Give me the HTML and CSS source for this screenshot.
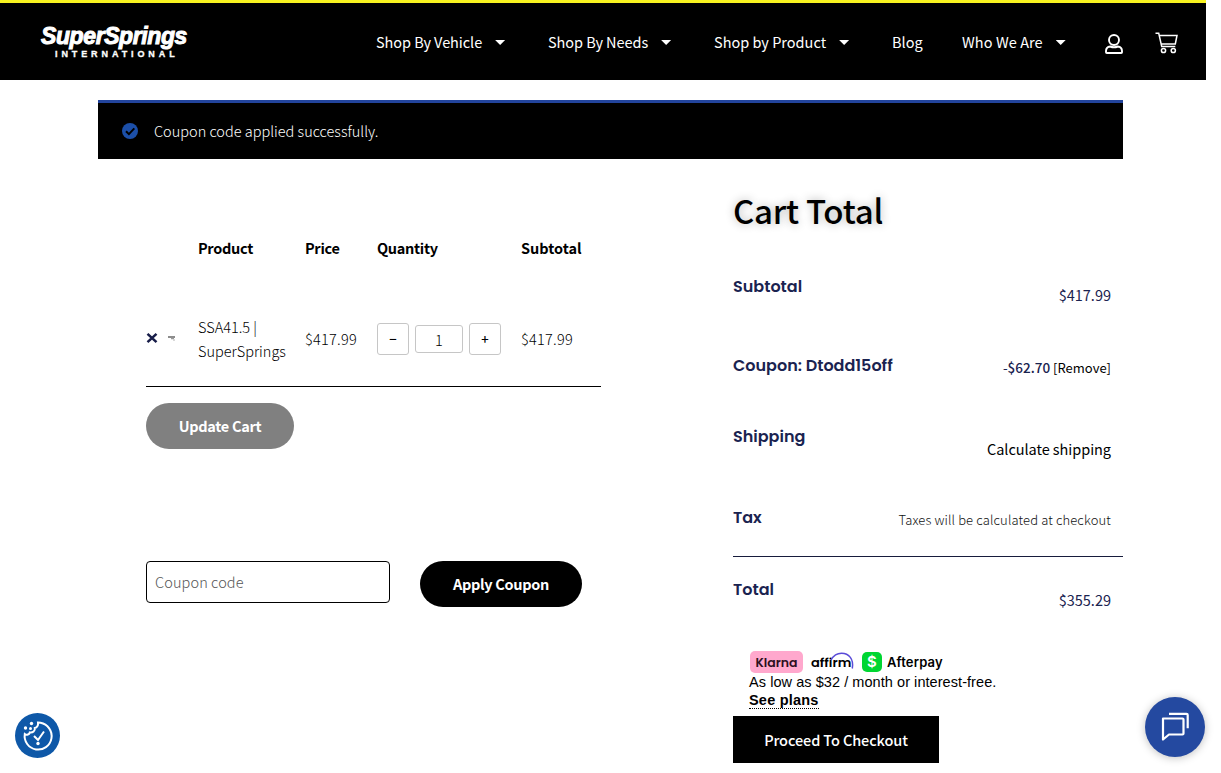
FILE: index.html
```html
<!DOCTYPE html>
<html lang="en">
<head>
<meta charset="utf-8">
<title>Cart - SuperSprings International</title>
<link rel="stylesheet" href="styles.css">
</head>
<body>
<header class="site-header">
  <a class="logo"><span class="logo-name">SuperSprings</span><span class="logo-sub">INTERNATIONAL</span></a>
  <nav class="nav">
    <a class="w1"><span>Shop By Vehicle</span><i class="caret"></i></a>
    <a class="w2"><span>Shop By Needs</span><i class="caret"></i></a>
    <a class="w3"><span>Shop by Product</span><i class="caret"></i></a>
    <a class="w4"><span>Blog</span></a>
    <a class="w5"><span>Who We Are</span><i class="caret"></i></a>
  </nav>
  <svg class="icon-user" viewBox="0 0 18 20"><circle cx="9" cy="6" r="5"/><path d="M5.300 12.500C2.500 12.800 1 14.500 1 17v1.200q0 .8.800.8h14.400q.8 0 .8-.8V17c0-2.500-1.500-4.200-4.300-4.500-2.400 1-5 1-7.400 0z"/></svg>
  <svg class="icon-cart" viewBox="0 0 23 22"><path d="M.5 1.200h3.200l3 13.300h13.600M4.200 3.500h17.800l-1.700 8.500H6.200"/><circle cx="8.500" cy="18.500" r="2.100"/><circle cx="18.300" cy="18.500" r="2.100"/></svg>
</header>
<main class="page">
  <div class="notice">
    <svg class="notice-icon" viewBox="0 0 16 16"><circle cx="8" cy="8" r="8"/><path d="M4 8.200l2.900 2.900L12.300 5.400"/></svg>
    <span>Coupon code applied successfully.</span>
  </div>
  <div class="columns">
    <section class="cart">
      <div class="row head"><span></span><span></span><span class="tight">Product</span><span class="tight">Price</span><span class="tight">Quantity</span><span>Subtotal</span></div>
      <div class="row item">
        <svg class="remove" viewBox="0 0 12 12"><path d="M1.500 1.800l9 8.400M10.500 1.800l-9 8.400"/></svg>
        <svg class="thumb" viewBox="0 0 9 7"><path class="t1" d="M1 2h7"/><path class="t2" d="M4 3.500h3"/><path class="t3" d="M6 5h2"/></svg>
        <span class="name">SSA41.5 |<br>SuperSprings</span>
        <span class="price">$417.99</span>
        <div class="qty"><button>−</button><span class="qty-value">1</span><button>+</button></div>
        <span class="price">$417.99</span>
      </div>
      <button class="pill update">Update Cart</button>
      <div class="coupon"><input class="coupon-input" placeholder="Coupon code"><button class="pill apply">Apply Coupon</button></div>
    </section>
    <section class="totals">
      <h2>Cart Total</h2>
      <div class="line l-sub"><span class="label">Subtotal</span><span class="value v-sub">$417.99</span></div>
      <div class="line l-coupon"><span class="label">Coupon: Dtodd15off</span><span class="value v-coupon">-<b>$62.70</b> <a>[Remove]</a></span></div>
      <div class="line l-ship"><span class="label">Shipping</span><span class="value v-ship">Calculate shipping</span></div>
      <div class="line l-tax"><span class="label">Tax</span><span class="value v-tax">Taxes will be calculated at checkout</span></div>
      <div class="line l-total"><span class="label">Total</span><span class="value v-total">$355.29</span></div>
      <div class="plans">
        <div class="brands">
          <span class="klarna">Klarna</span>
          <span class="affirm">affirm<svg class="arc" viewBox="0 0 26 18"><path d="M2 8C4.500 3.500 8 1.200 12.500 1.200c7.500 0 12.500 6 10.800 15.300"/></svg></span>
          <span class="cash">$</span>
          <span class="afterpay">Afterpay</span>
        </div>
        <div class="plans-text">As low as $32 / month or interest-free.</div>
        <a class="plans-link">See plans</a>
      </div>
      <button class="checkout">Proceed To Checkout</button>
    </section>
  </div>
</main>
<div class="float cookie"><svg viewBox="0 0 45 45"><path d="M23 9.500c1 0 1.500.1 2.500.3A13.500 13.500 0 1 1 9.800 21c2 1.500 4.700.5 5-1.500 3 .5 5.500-1.500 5-4.500 2.500-.3 3.500-3 3.200-5.500z"/><path d="M19 23l4 4 6-8.500"/><g class="dots"><circle cx="16.500" cy="10.500" r="1.700"/><circle cx="10.500" cy="15" r="1.700"/><circle cx="15.500" cy="15.500" r="1.500"/><circle cx="23" cy="30.500" r="1.700"/></g></svg></div>
<div class="float chat"><svg viewBox="0 0 60 60"><path d="M18 21.500h19.500q1 0 1 1v14q0 1-1 1H24l-6 5z"/><path d="M24 16.800h17.500q1.200 0 1.200 1.200v13.200"/></svg></div>
</body>
</html>
```
FILE: styles.css
```css
* { box-sizing: border-box; }
body { margin: 0; width: 1221px; height: 773px; overflow: hidden; background: #fff; color: #000; font-family: "Noto Sans CJK SC", "Noto Sans", sans-serif; font-size: 14.5px; line-height: 24px; }
button, input { font: inherit; margin: 0; }
.site-header { width: 1206px; height: 80px; background: #000; border-top: 3px solid #f8f320; color: #fff; display: flex; padding-left: 41px; }
.logo { width: 335px; padding-top: 20px; display: flex; flex-direction: column; font-family: "Liberation Sans", Arial, sans-serif; font-weight: bold; }
.logo-name { font-size: 23px; line-height: 26px; font-style: italic; letter-spacing: -.4px; -webkit-text-stroke: 1px #fff; }
.logo-sub { font-size: 9px; line-height: 10px; letter-spacing: 3.900px; padding-left: 14px; -webkit-text-stroke: .3px #fff; }
.nav { display: flex; padding-top: 27px; }
.nav a { display: flex; gap: 13px; white-space: nowrap; }
.w1 { width: 172px; letter-spacing: -.060px; }
.w2 { width: 166px; letter-spacing: -.060px; }
.w3 { width: 178px; }
.w4 { width: 70px; }
.w5 { width: 143px; letter-spacing: .080px; }
.caret { width: 10px; height: 5px; margin-top: 10px; background: #fff; clip-path: polygon(0 0, 100% 0, 50% 100%); }
.icon-user { width: 18px; height: 20px; margin-top: 31px; fill: none; stroke: #fff; stroke-width: 1.900; }
.icon-cart { width: 23px; height: 22px; margin: 29px 0 0 32px; fill: none; stroke: #fff; stroke-width: 1.500; }
.page { width: 1025px; margin: 20px 0 0 98px; }
.notice { height: 59px; background: #000; border-top: 3px solid #22449c; color: #fff; display: flex; align-items: center; padding: 0 0 0 24px; gap: 16px; font-weight: 300; }
.notice-icon { width: 16px; height: 16px; fill: #1c4fa8; margin-top: -1px; }
.notice-icon path { fill: none; stroke: #000; stroke-width: 2; }
.columns { display: flex; }
.cart { width: 635px; padding: 77px 0 0 48px; }
.row { display: grid; grid-template-columns: 20px 32px 107px 72px 144px 80px; width: 455px; align-items: center; }
.head { font-weight: 700; height: 24px; }
.tight { letter-spacing: -.3px; }
.item { height: 127px; border-bottom: 1px solid #000; padding-top: 31px; font-weight: 300; }
.price { letter-spacing: .25px; }
.remove { width: 12px; height: 12px; margin-top: -1px; stroke: #171c48; stroke-width: 2.500; }
.thumb { width: 9px; height: 7px; margin: 0 0 0 1px; fill: none; stroke-width: 1.500; }
.t1 { stroke: #666; }
.t2 { stroke: #999; }
.t3 { stroke: #ccc; }
.qty { display: flex; align-items: center; gap: 6px; }
.qty button { width: 32px; height: 32px; border: 1px solid #c6c6c6; border-radius: 3px; background: #fff; color: #000; padding: 0; font-size: 13px; font-weight: 500; }
.qty-value { width: 48px; height: 28px; border: 1px solid #c6c6c6; border-radius: 3px; text-align: center; line-height: 28px; }
.pill { border: 0; border-radius: 23px; height: 46px; color: #fff; font-weight: 600; padding: 0; display: block; letter-spacing: -.3px; }
.update { width: 148px; background: #808080; margin-top: 16px; }
.coupon { display: flex; gap: 30px; margin-top: 112px; }
.coupon-input { width: 244px; height: 42px; border: 1px solid #000; border-radius: 4px; padding: 0 8px 2px; font-weight: 300; letter-spacing: .100px; }
.coupon-input::placeholder { color: #555; opacity: 1; }
.apply { width: 162px; background: #000; }
.totals { width: 390px; padding-top: 31px; }
h2 { margin: 0; font-size: 33px; line-height: 40px; font-weight: 500; letter-spacing: -.25px; text-shadow: 0 0 10px rgba(0, 0, 0, .3); }
.line { display: flex; justify-content: space-between; padding-right: 12px; color: #1a2350; white-space: nowrap; }
.label { font-family: Poppins, Inter, sans-serif; font-size: 16px; font-weight: 600; letter-spacing: 0; padding-top: 1px; }
.value { font-weight: 400; }
.l-sub { height: 79px; margin-top: 44px; }
.l-coupon { height: 71px; }
.l-ship { height: 81px; }
.l-tax { height: 52px; border-bottom: 1px solid #171c3c; }
.l-total { height: 74px; margin-top: 20px; }
.v-sub { padding-top: 9px; }
.v-coupon { padding-top: 2px; font-size: 13.500px; }
.v-coupon b { font-weight: 500; }
.v-coupon a { color: #000; font-size: 13px; }
.v-ship { padding-top: 13px; color: #000; letter-spacing: -.050px; }
.v-tax { padding-top: 3px; font-size: 13px; font-weight: 300; color: #111; letter-spacing: .120px; }
.v-total { padding-top: 11px; }
.plans { padding-left: 16px; height: 65px; font-family: "Liberation Sans", Arial, sans-serif; display: flex; flex-direction: column; align-items: flex-start; }
.brands { display: flex; height: 22px; align-items: center; font-family: Inter, sans-serif; font-weight: 600; line-height: 22px; }
.klarna { width: 53px; height: 22px; margin-left: 1px; border-radius: 5px; background: #ffa8cd; color: #2c1020; text-align: center; font-family: Poppins, Inter, sans-serif; font-size: 12.500px; font-weight: 600; line-height: 23px; }
.affirm { width: 43px; margin-left: 8px; font-family: Poppins, Inter, sans-serif; font-size: 13px; line-height: 23px; position: relative; }
.arc { position: absolute; left: 18px; top: 1px; width: 26px; height: 18px; fill: none; stroke: #5a4bd8; stroke-width: 1.500; }
.cash { width: 20px; height: 20px; margin-left: 8px; border-radius: 5px; background: #00d632; color: #fff; text-align: center; line-height: 20px; font-size: 15px; }
.afterpay { margin-left: 5px; font-size: 13px; letter-spacing: .150px; }
.plans-text { font-size: 14.500px; line-height: 18px; white-space: nowrap; letter-spacing: .060px; }
.plans-link { font-size: 14.500px; line-height: 16px; padding-top: 1px; font-weight: bold; border-bottom: 1px dotted #000; letter-spacing: .200px; }
.checkout { display: block; width: 206px; height: 47px; border: 0; background: #000; color: #fff; font-weight: 500; padding: 0; letter-spacing: -.100px; }
.float { position: fixed; border-radius: 50%; }
.float svg { display: block; width: 100%; height: 100%; fill: none; stroke: #fff; }
.cookie { left: 15px; top: 713px; width: 45px; height: 45px; background: #0e58a8; }
.cookie svg { stroke-width: 2; }
.cookie svg .dots { fill: #fff; stroke: none; }
.chat { left: 1145px; top: 697px; width: 60px; height: 60px; background: #2449a0; box-shadow: 0 1px 8px rgba(0, 0, 0, .25); }
.chat svg { stroke-width: 2.200; stroke-linejoin: round; }
```
